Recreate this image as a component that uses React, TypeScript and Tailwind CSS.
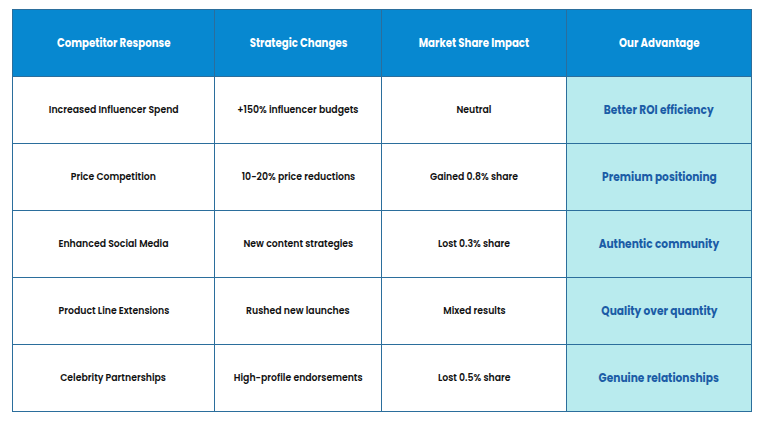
const rows = [
  ["Increased Influencer Spend", "+150% influencer budgets", "Neutral", "Better ROI efficiency"],
  ["Price Competition", "10-20% price reductions", "Gained 0.8% share", "Premium positioning"],
  ["Enhanced Social Media", "New content strategies", "Lost 0.3% share", "Authentic community"],
  ["Product Line Extensions", "Rushed new launches", "Mixed results", "Quality over quantity"],
  ["Celebrity Partnerships", "High-profile endorsements", "Lost 0.5% share", "Genuine relationships"],
]

const headers = ["Competitor Response", "Strategic Changes", "Market Share Impact", "Our Advantage"]

// the source slide is a little squeezed sideways, so text is narrowed to match
function Squeezed({ children, bold }: { children: React.ReactNode; bold?: boolean }) {
  return (
    <span className={bold ? "inline-block whitespace-nowrap scale-x-[0.85]" : "inline-block whitespace-nowrap scale-x-[0.88]"}>
      {children}
    </span>
  )
}

export default function App() {
  return (
    <div className="w-[768px] h-[432px] bg-white pl-3 pt-[9px] font-['Poppins','Inter',sans-serif]">
      <table className="border-collapse table-fixed w-[739px]">
        <colgroup>
          <col className="w-[202px]" />
          <col className="w-[167px]" />
          <col className="w-[185px]" />
          <col className="w-[185px]" />
        </colgroup>
        <thead>
          <tr className="h-[67px] bg-[#0788d0]">
            {headers.map((h) => (
              <th
                key={h}
                className="border border-[#2b6e9c] text-white text-[12px] font-bold text-center"
              >
                <Squeezed bold>{h}</Squeezed>
              </th>
            ))}
          </tr>
        </thead>
        <tbody>
          {rows.map((r) => (
            <tr key={r[0]} className="h-[67px]">
              <td className="border-[1.5px] border-[#2b6e9c] text-[10.6px] font-semibold text-[#111] text-center">
                <Squeezed>{r[0]}</Squeezed>
              </td>
              <td className="border-[1.5px] border-[#2b6e9c] text-[10.6px] font-semibold text-[#111] text-center">
                <Squeezed>{r[1]}</Squeezed>
              </td>
              <td className="border-[1.5px] border-[#2b6e9c] text-[10.6px] font-semibold text-[#111] text-center">
                <Squeezed>{r[2]}</Squeezed>
              </td>
              <td className="border-[1.5px] border-[#2b6e9c] bg-[#b9ebee] text-[12.5px] font-bold text-[#1b5ca6] text-center">
                <Squeezed bold>{r[3]}</Squeezed>
              </td>
            </tr>
          ))}
        </tbody>
      </table>
    </div>
  )
}
